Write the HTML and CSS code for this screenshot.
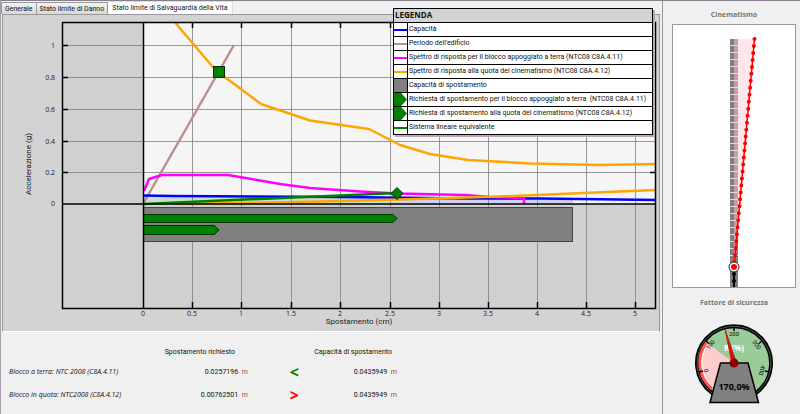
FILE: index.html
```
<!DOCTYPE html>
<html lang="it">
<head>
    <meta charset="UTF-8">
    <meta name="viewport" content="width=device-width, initial-scale=1.0">
    <title>Stato limite di Salvaguardia della Vita</title>
    <link rel="stylesheet" href="styles.css">
</head>
<body>
    <div class="container">
        <main class="main">
            <div class="tabs" role="tablist">
                <button type="button" class="tab" role="tab">Generale</button>
                <button type="button" class="tab" role="tab">Stato limite di Danno</button>
                <button type="button" class="tab active" role="tab" aria-selected="true">Stato limite di Salvaguardia della Vita</button>
            </div>

            <div class="panel">
                <svg class="chart" viewBox="3 15 656 316">
                    <!-- plot background -->
                    <rect x="62" y="22" width="594" height="286" fill="#d0d0d0"/>
                    <rect x="143" y="22" width="513" height="182" fill="#f5f5f5"/>
                    <path d="M143 197L397 198V204H143Z" fill="#c9dfd0"/>
                    <path d="M397 198L573 199V204H397Z" fill="#ccd0f5"/>

                    <!-- grid -->
                    <path class="grid" d="M62 45.5H656M62 77.5H656M62 109.5H656M62 141.5H656M62 172.5H656"/>
                    <path class="grid" d="M192.5 22V308M241.5 22V308M291.5 22V308M340.5 22V308M390.5 22V308M439.5 22V308M488.5 22V308M537.5 22V308M586.5 22V308M635.5 22V308"/>

                    <!-- curves -->
                    <path class="curve" stroke="rosybrown" d="M143 204L234 45"/>
                    <path class="curve" stroke="blue" d="M143 195.5L172 196L340 197L470 198.5L540 198.5L656 200"/>
                    <path class="curve" stroke="magenta" d="M144 191L149 179L162 175H228L280 184L310 188L360 191.5L397 193.5L465 195L490 197L524 198V204"/>
                    <path class="curve" stroke="orange" d="M175 22L178 26L212 66L226 78L261 104L310 120.5L369 129L400 145L430 154L468 160L530 163.5L600 165L656 164"/>
                    <path class="curve" stroke="orange" d="M175 204L300 202L400 199.5L500 196.5L560 194L656 190"/>
                    <path class="curve" stroke="green" d="M143 204L397 193"/>

                    <!-- displacement bars -->
                    <rect x="143.5" y="207.5" width="429" height="34" fill="gray" stroke="#444"/>
                    <path class="bar" d="M143.5 214.5H393L397 218.5L393 222.5H143.5Z"/>
                    <path class="bar" d="M143.5 225.5H214.5L219 230L214.5 234.5H143.5Z"/>

                    <!-- axes and ticks -->
                    <path class="axis" d="M62.5 22.5H655.5V308.5H62.5ZM143.5 22V308M62 204H656"/>
                    <path class="axis" d="M62 45.5h6M62 77.5h6M62 109.5h6M62 141.5h6M62 172.5h6M650 172.5h6"/>
                    <path class="axis" d="M192.5 22v6M241.5 22v6M291.5 22v6M340.5 22v6M390.5 22v6M192.5 308v-6M241.5 308v-6M291.5 308v-6M340.5 308v-6M390.5 308v-6M439.5 308v-6M488.5 308v-6M537.5 308v-6M586.5 308v-6M635.5 308v-6"/>
                    <rect class="bar" x="213.5" y="66.5" width="11" height="11"/>
                    <path class="bar" d="M397 187.5L403 193.5L397 199.5L391 193.5Z"/>

                    <g class="labels" text-anchor="end">
                        <text x="55" y="48">1</text>
                        <text x="55" y="80">0.8</text>
                        <text x="55" y="112">0.6</text>
                        <text x="55" y="144">0.4</text>
                        <text x="55" y="175">0.2</text>
                        <text x="55" y="206">0</text>
                    </g>
                    <g class="labels" text-anchor="middle">
                        <text x="143" y="316">0</text>
                        <text x="192" y="316">0.5</text>
                        <text x="241" y="316">1</text>
                        <text x="291" y="316">1.5</text>
                        <text x="340" y="316">2</text>
                        <text x="390" y="316">2.5</text>
                        <text x="439" y="316">3</text>
                        <text x="488" y="316">3.5</text>
                        <text x="537" y="316">4</text>
                        <text x="586" y="316">4.5</text>
                        <text x="635" y="316">5</text>
                    </g>
                    <g class="axis-title" text-anchor="middle">
                        <text x="359" y="324">Spostamento (cm)</text>
                        <text transform="translate(31 164) rotate(-90)">Accelerazione (g)</text>
                    </g>
                </svg>

                <div class="legend">
                    <h2>LEGENDA</h2>
                    <ul>
                        <li><span class="key line blue"></span>Capacità</li>
                        <li><span class="key line rosy"></span>Periodo dell'edificio</li>
                        <li><span class="key line magenta"></span>Spettro di risposta per il blocco appoggiato a terra (NTC08 C8A.4.11)</li>
                        <li><span class="key line orange"></span>Spettro di risposta alla quota del cinematismo (NTC08 C8A.4.12)</li>
                        <li><span class="key fill"></span>Capacità di spostamento</li>
                        <li><span class="key arrow"></span>Richiesta di spostamento per il blocco appoggiato a terra&nbsp; (NTC08 C8A.4.11)</li>
                        <li><span class="key arrow"></span>Richiesta di spostamento alla quota del cinematismo (NTC08 C8A.4.12)</li>
                        <li><span class="key line green"></span>Sistema lineare equivalente</li>
                    </ul>
                </div>
            </div>

            <table class="results">
                <thead>
                    <tr>
                        <td></td>
                        <th scope="col" class="required">Spostamento richiesto</th>
                        <td></td>
                        <th scope="col" class="capacity">Capacità di spostamento</th>
                    </tr>
                </thead>
                <tbody>
                    <tr>
                        <th scope="row">Blocco a terra: NTC 2008 (C8A.4.11)</th>
                        <td class="value">0.0257196 <span class="unit">m</span></td>
                        <td class="sign ok">&lt;</td>
                        <td class="value">0.0435949 <span class="unit">m</span></td>
                    </tr>
                    <tr>
                        <th scope="row">Blocco in quota: NTC2008 (C8A.4.12)</th>
                        <td class="value">0.00762501 <span class="unit">m</span></td>
                        <td class="sign ko">&gt;</td>
                        <td class="value">0.0435949 <span class="unit">m</span></td>
                    </tr>
                </tbody>
            </table>
        </main>

        <aside class="side">
            <h2>Cinematismo</h2>
            <div class="box">
                <svg class="wall" viewBox="673 25 122 262">
                    <path d="M734 39V287" stroke="gray" stroke-width="8"/>
                    <path d="M734 39H754.5L734 267Z" fill="#ffc0cb" fill-opacity="0.4"/>
                    <path d="M734 39H738V222L734 267Z" fill="#e0a8b4" fill-opacity="0.4"/>
                    <path d="M734 45V262" stroke="#ddd" stroke-width="8" stroke-dasharray="1 6"/>
                    <path d="M734 267V287" stroke="#000" stroke-width="2"/>
                    <path d="M734 274V287" stroke="#000" stroke-width="4" stroke-linecap="round" stroke-dasharray="0 7"/>
                    <path d="M754.5 39L734 267" stroke="red" stroke-width="1.5"/>
                    <path d="M754.5 39L734 267" stroke="red" stroke-width="4" stroke-linecap="round" stroke-dasharray="0 7"/>
                    <circle cx="734" cy="267" r="4" fill="red" stroke="#fff" stroke-width="2"/>
                    <circle cx="734" cy="267" r="5" fill="none" stroke="#222" stroke-width="1"/>
                </svg>
            </div>
            <h2>Fattore di sicurezza</h2>
            <svg class="gauge" viewBox="-40 -40 80 82">
                <path d="M-22 30A37 37 0 1 1 22 30Z" fill="#9c9" stroke="#000" stroke-width="4"/>
                <path d="M-22 30A37 37 0 1 1 22 30" fill="none" stroke="#555" stroke-width="1"/>
                <path d="M0 0L-22 27A35 35 0 0 1 -28 -21Z" fill="#fcc"/>
                <path d="M-22 26A34 34 0 0 1 -27.5 -20.5" fill="none" stroke="#f55" stroke-width="3"/>
                <path d="M-21 24A32 32 0 0 1 -26 -19" fill="none" stroke="#fff" stroke-width="1"/>
                <path d="M-35 9L-31 8M-28 -22L-25 -19.5M0 -36V-32M28 -22L25 -19.5M35 9L31 8" stroke="#000" stroke-width="1.5"/>
                <g class="scale" text-anchor="middle">
                    <text transform="translate(-26 7) rotate(-105)">0</text>
                    <text transform="translate(-22 -17) rotate(-52)">100</text>
                    <text y="-27">200</text>
                    <text transform="translate(21 -17) rotate(52)">300</text>
                    <text transform="translate(26 7) rotate(105)">400</text>
                </g>
                <text class="unit-label" y="-12" text-anchor="middle">R (%)</text>
                <path d="M-13.5 0H14L24.5 39.5H-24Z" fill="gray" stroke="#000" stroke-width="1.5"/>
                <path d="M-9 -34L2 -1L-2 0Z" fill="red" stroke="red"/>
                <path d="M-8 -30L2 -1" stroke="#555" stroke-width="1"/>
                <circle r="4.5" fill="#8b0000"/>
                <text class="reading" y="27" text-anchor="middle">170,0%</text>
            </svg>
        </aside>
    </div>
</body>
</html>
```

FILE: styles.css
```
*{
    margin: 0;
    padding: 0;
    box-sizing: border-box;
}
body{
    background-color: #f0f0f0;
    color: #111;
    font-family: Roboto, "Open Sans", sans-serif;
    font-size: 7px;
    line-height: 10px;
}
h2{
    font-family: "Open Sans", sans-serif;
    font-size: 7px;
}
.container{
    display: flex;
    min-height: 100vh;
    border-top: 1px solid #85808c;
    border-left: 1px solid #a5a0ac;
}
.main{
    flex: 1;
    min-width: 0;
}
.tabs{
    display: flex;
    align-items: flex-end;
    height: 13px;
}
.tab{
    height: 12px;
    padding: 0 3px;
    background: linear-gradient(#f2f2f2, #d8d8d8);
    border: 1px solid #999;
    border-bottom: none;
    color: #111;
    font: inherit;
    white-space: nowrap;
}
.tab + .tab{
    border-left: none;
}
.tab.active{
    height: 13px;
    padding: 0 4px;
    background: white;
    border-color: #ddd;
}
.panel{
    position: relative;
    margin: 0 2px 0 1px;
    background-color: #d3d3d3;
    border: 1px solid #999;
    border-bottom-color: white;
}
.chart{
    display: block;
    width: 100%;
}
.grid{
    fill: none;
    stroke: #808080;
    stroke-opacity: 0.8;
}
.curve{
    fill: none;
    stroke-width: 2.5;
    stroke-linejoin: round;
}
.bar{
    fill: green;
    stroke: #003300;
}
.axis{
    fill: none;
    stroke: black;
    stroke-width: 1.5;
}
.labels{
    font-family: "Open Sans", sans-serif;
    font-size: 7px;
    fill: #222;
}
.axis-title{
    font-size: 8px;
    fill: #222;
}
.legend{
    position: absolute;
    top: -7px;
    right: 6px;
    width: 260px;
    background-color: white;
    border: 1px solid black;
    box-shadow: 2px 2px 0 #b8a8b8;
}
.legend h2{
    height: 13px;
    padding: 1px;
    background-color: #d3d3d3;
    font-size: 8px;
}
.legend ul{
    list-style: none;
}
.legend li{
    display: flex;
    height: 14px;
    border-top: 1px solid black;
    line-height: 13px;
    white-space: nowrap;
}
.key{
    display: flex;
    flex: none;
    align-items: center;
    width: 14px;
    margin-right: 1px;
    border-right: 1px solid black;
}
.line::before{
    content: "";
    width: 100%;
    border-top: 2px solid;
}
.blue{
    color: blue;
}
.rosy{
    color: rosybrown;
}
.magenta{
    color: magenta;
}
.orange{
    color: orange;
}
.green{
    color: green;
}
.legend .key{
    border-right-color: black;
}
.fill{
    background-color: gray;
}
.arrow::before{
    content: "";
    width: 100%;
    height: 13px;
    background-color: green;
    clip-path: polygon(0 0, 55% 0, 100% 50%, 55% 100%, 0 100%);
}
.results{
    width: 388px;
    margin: 12px 0 0 8px;
    border-collapse: collapse;
    table-layout: fixed;
}
.results thead td:first-child{
    width: 144px;
}
.results th{
    font-weight: normal;
    text-align: right;
    white-space: nowrap;
}
.results thead th{
    height: 16px;
    width: 95px;
}
.results .required{
    padding-right: 13px;
}
.results .capacity{
    padding-right: 5px;
}
.results tbody tr{
    height: 23px;
}
.results tbody th{
    font-family: "Open Sans", sans-serif;
    font-style: italic;
    text-align: left;
}
.value{
    text-align: right;
}
.unit{
    margin-left: 2px;
    color: #b04030;
}
.sign{
    padding-right: 3px;
    font-family: "Open Sans", sans-serif;
    font-size: 16px;
    font-weight: bold;
    text-align: right;
}
.ok{
    color: green;
}
.ko{
    color: red;
}
.side{
    width: 138px;
    padding: 9px 4px 0 9px;
    border-left: 1px solid #999;
    text-align: center;
}
.side h2{
    color: #777;
}
.box{
    margin: 4px 0 10px;
    background-color: white;
    border: 1px solid #999;
}
.wall{
    display: block;
    width: 100%;
}
.gauge{
    width: 80px;
    margin-top: 15px;
}
.scale{
    font-size: 6px;
}
.unit-label{
    fill: white;
    font-family: "Open Sans", sans-serif;
    font-size: 8px;
    font-weight: bold;
}
.reading{
    font-family: "Open Sans", sans-serif;
    font-size: 9px;
    font-weight: bold;
}
```
